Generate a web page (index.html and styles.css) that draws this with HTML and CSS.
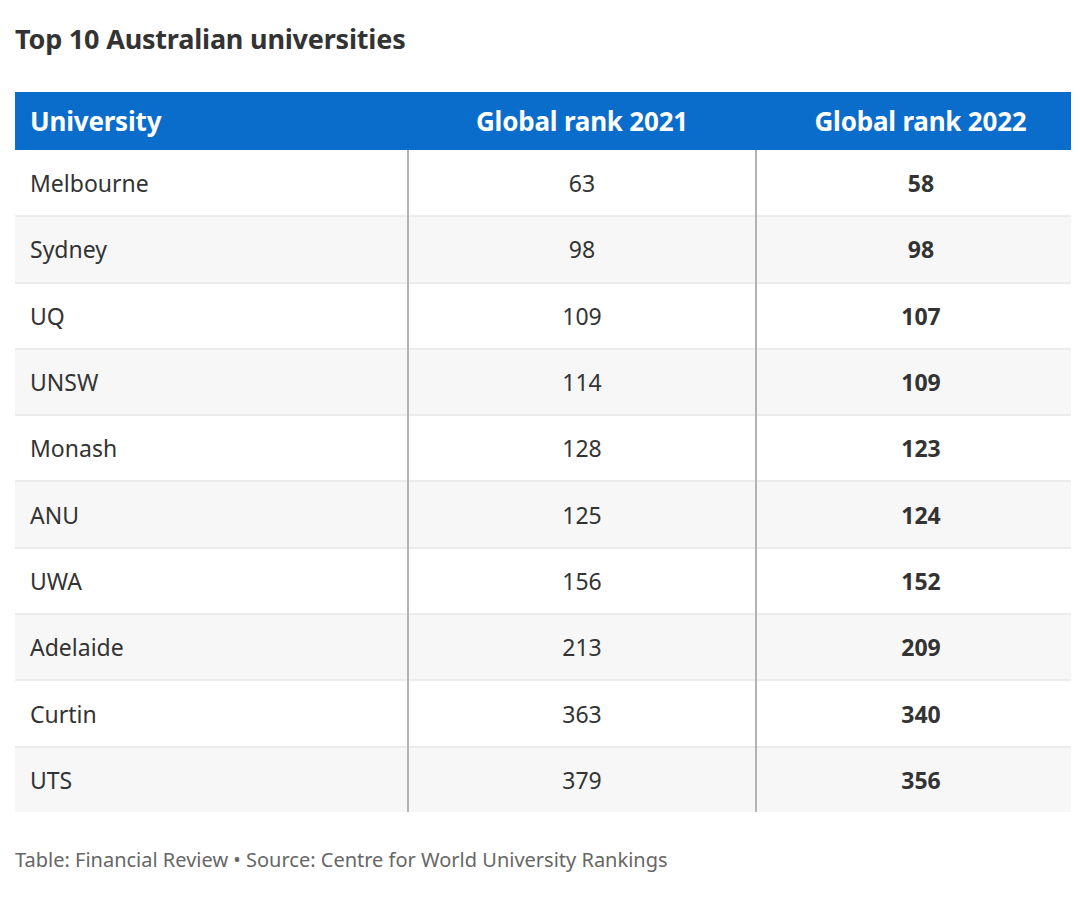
FILE: index.html
```html
<!DOCTYPE html>
<html lang="en">
<head>
<meta charset="utf-8">
<title>Top 10 Australian universities</title>
<link rel="stylesheet" href="styles.css">
</head>
<body>
<div class="wrap">
  <h1 class="title">Top 10 Australian universities</h1>
  <table class="tbl">
    <colgroup>
      <col class="w1">
      <col class="w2">
      <col class="w3">
    </colgroup>
    <thead>
      <tr>
        <th class="c1">University</th>
        <th class="c2">Global rank 2021</th>
        <th class="c3">Global rank 2022</th>
      </tr>
    </thead>
    <tbody>
      <tr><td class="c1">Melbourne</td><td class="c2">63</td><td class="c3">58</td></tr>
      <tr><td class="c1">Sydney</td><td class="c2">98</td><td class="c3">98</td></tr>
      <tr><td class="c1">UQ</td><td class="c2">109</td><td class="c3">107</td></tr>
      <tr><td class="c1">UNSW</td><td class="c2">114</td><td class="c3">109</td></tr>
      <tr><td class="c1">Monash</td><td class="c2">128</td><td class="c3">123</td></tr>
      <tr><td class="c1">ANU</td><td class="c2">125</td><td class="c3">124</td></tr>
      <tr><td class="c1">UWA</td><td class="c2">156</td><td class="c3">152</td></tr>
      <tr><td class="c1">Adelaide</td><td class="c2">213</td><td class="c3">209</td></tr>
      <tr><td class="c1">Curtin</td><td class="c2">363</td><td class="c3">340</td></tr>
      <tr><td class="c1">UTS</td><td class="c2">379</td><td class="c3">356</td></tr>
    </tbody>
  </table>
  <p class="source">Table: Financial Review • Source: Centre for World University Rankings</p>
</div>
</body>
</html>
```
FILE: styles.css
```css
html, body {
  margin: 0;
  padding: 0;
  background: #ffffff;
}
body {
  font-family: "Noto Sans", "Open Sans", sans-serif;
  color: #333333;
}
.wrap {
  padding: 22px 9px 0 15px;
}
.title {
  margin: 0 0 37px;
  font-size: 27px;
  line-height: 33px;
  font-weight: 700;
  color: #333333;
  letter-spacing: -0.2px;
}
.tbl {
  width: 1056px;
  border-collapse: collapse;
  table-layout: fixed;
}
.w1 { width: 393px; }
.w2 { width: 348px; }
.w3 { width: 315px; }
.tbl th {
  background: #0a6dcc;
  color: #ffffff;
  font-size: 26px;
  font-weight: 700;
  height: 58px;
  padding: 0;
  letter-spacing: -0.2px;
}
.tbl td {
  font-size: 23px;
  height: 64.3px;
  padding: 0;
  border-top: 2px solid #ececec;
  color: #333333;
}
.tbl tbody tr:first-child td {
  border-top: none;
  height: 65.3px;
}
.tbl tbody tr:nth-child(even) td {
  background: #f7f7f7;
}
.tbl .c1 {
  text-align: left;
  padding-left: 15px;
}
.tbl .c2 {
  text-align: center;
}
.tbl .c3 {
  text-align: center;
  padding-left: 14px;
}
.tbl td.c2 {
  border-left: 2px solid #b3b3b3;
  border-right: 2px solid #b3b3b3;
}
.tbl td.c3 {
  font-weight: 700;
}
.source {
  margin: 34px 0 0;
  font-size: 20px;
  color: #666666;
}
```
